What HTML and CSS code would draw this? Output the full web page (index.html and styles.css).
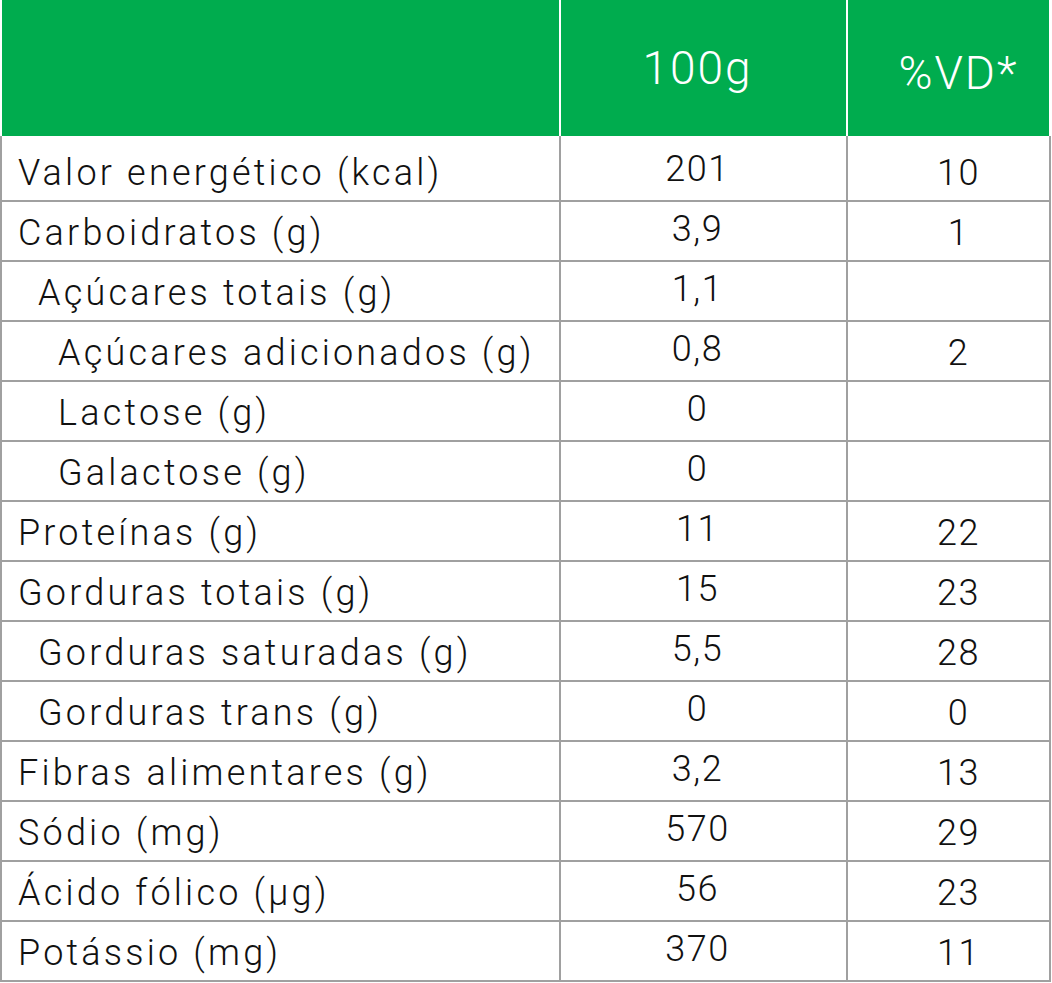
FILE: index.html
```html
<!DOCTYPE html>
<html lang="pt-BR">
<head>
<meta charset="utf-8">
<title>Tabela nutricional</title>
<link rel="stylesheet" href="styles.css">
</head>
<body>
<div class="table">
  <div class="head">
    <div class="hcell"></div>
    <div class="hcell c2">100g</div>
    <div class="hcell c3">%VD*</div>
  </div>
  <div class="row first">
    <div class="cell label">Valor energético (kcal)</div>
    <div class="cell c2">201</div>
    <div class="cell c3">10</div>
  </div>
  <div class="row">
    <div class="cell label">Carboidratos (g)</div>
    <div class="cell c2">3,9</div>
    <div class="cell c3">1</div>
  </div>
  <div class="row">
    <div class="cell label l1">Açúcares totais (g)</div>
    <div class="cell c2">1,1</div>
    <div class="cell c3"></div>
  </div>
  <div class="row">
    <div class="cell label l2">Açúcares adicionados (g)</div>
    <div class="cell c2">0,8</div>
    <div class="cell c3">2</div>
  </div>
  <div class="row">
    <div class="cell label l2">Lactose (g)</div>
    <div class="cell c2">0</div>
    <div class="cell c3"></div>
  </div>
  <div class="row">
    <div class="cell label l2">Galactose (g)</div>
    <div class="cell c2">0</div>
    <div class="cell c3"></div>
  </div>
  <div class="row">
    <div class="cell label">Proteínas (g)</div>
    <div class="cell c2">11</div>
    <div class="cell c3">22</div>
  </div>
  <div class="row">
    <div class="cell label">Gorduras totais (g)</div>
    <div class="cell c2">15</div>
    <div class="cell c3">23</div>
  </div>
  <div class="row">
    <div class="cell label l1">Gorduras saturadas (g)</div>
    <div class="cell c2">5,5</div>
    <div class="cell c3">28</div>
  </div>
  <div class="row">
    <div class="cell label l1">Gorduras trans (g)</div>
    <div class="cell c2">0</div>
    <div class="cell c3">0</div>
  </div>
  <div class="row">
    <div class="cell label">Fibras alimentares (g)</div>
    <div class="cell c2">3,2</div>
    <div class="cell c3">13</div>
  </div>
  <div class="row">
    <div class="cell label">Sódio (mg)</div>
    <div class="cell c2">570</div>
    <div class="cell c3">29</div>
  </div>
  <div class="row">
    <div class="cell label">Ácido fólico (µg)</div>
    <div class="cell c2">56</div>
    <div class="cell c3">23</div>
  </div>
  <div class="row">
    <div class="cell label">Potássio (mg)</div>
    <div class="cell c2">370</div>
    <div class="cell c3">11</div>
  </div>
</div>
</body>
</html>
```
FILE: styles.css
```css
html, body {
  margin: 0;
  padding: 0;
  background: #ffffff;
}

.table {
  width: 1051px;
  font-family: Roboto, "Liberation Sans", sans-serif;
  font-weight: 300;
  color: #111111;
}

.head {
  display: grid;
  grid-template-columns: 557px 285px 201px;
  column-gap: 2px;
  padding: 0 2px;
  background: #ffffff;
  height: 136px;
}

.hcell {
  background: #00ac4e;
  color: #ffffff;
  font-size: 46px;
  line-height: 1;
  padding-top: 45px;
  text-align: center;
  letter-spacing: 2px;
}

.hcell.c2 {
  padding-right: 12px;
}

.hcell.c3 {
  padding-left: 20px;
  padding-top: 50px;
}

.row {
  display: grid;
  grid-template-columns: 557px 285px 201px;
  column-gap: 2px;
  padding: 0 2px 2px;
  background: #a0a0a0;
  height: 58px;
}

.row.first {
  height: 64px;
}

.cell {
  background: #ffffff;
  font-size: 36px;
  line-height: 1;
  letter-spacing: 1.5px;
  padding-top: 13px;
  white-space: nowrap;
}

.row.first .cell {
  padding-top: 19px;
}

.cell.label {
  padding-left: 16px;
  letter-spacing: 3.2px;
}

.cell.label.l1 {
  padding-left: 36px;
}

.cell.label.l2 {
  padding-left: 56px;
}

.cell.c2 {
  text-align: center;
  padding-right: 12px;
  padding-top: 9px;
}

.row.first .cell.c2 {
  padding-top: 15px;
}

.cell.c3 {
  text-align: center;
  padding-left: 20px;
}
```
